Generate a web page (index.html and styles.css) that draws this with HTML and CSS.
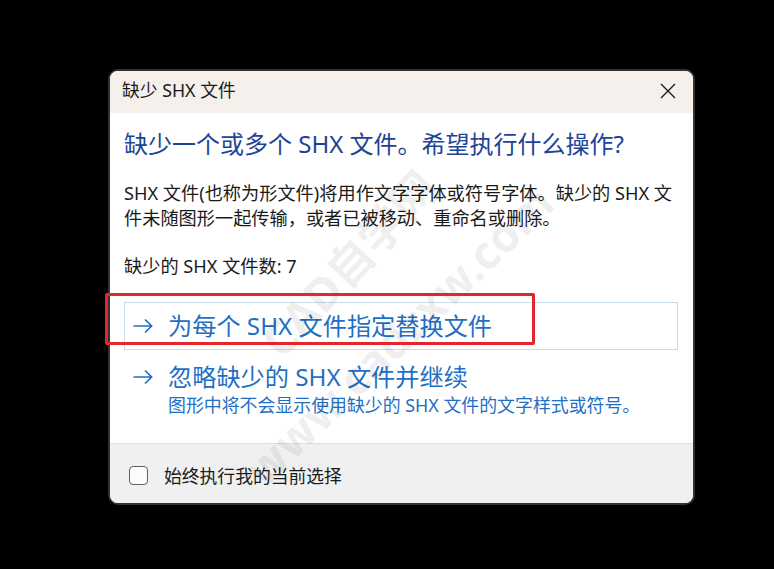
FILE: index.html
```html
<!DOCTYPE html>
<html lang="zh-CN">
<head>
<meta charset="utf-8">
<title>缺少 SHX 文件</title>
<link rel="stylesheet" href="styles.css">
</head>
<body>
<div class="dialog">
  <div class="titlebar">
    <span class="title">缺少 SHX 文件</span>
    <span class="close" aria-label="关闭">
      <svg width="16" height="16" viewBox="0 0 16 16"><path d="M1 1 L15 15 M15 1 L1 15" stroke="#1b1b1b" stroke-width="1.4" fill="none"/></svg>
    </span>
  </div>
  <div class="content">
    <h1 class="instruction">缺少一个或多个 SHX 文件。希望执行什么操作?</h1>
    <p class="body">SHX 文件(也称为形文件)将用作文字字体或符号字体。缺少的 SHX 文<br>件未随图形一起传输，或者已被移动、重命名或删除。</p>
    <p class="body count">缺少的 SHX 文件数: 7</p>
    <div class="link hover">
      <div class="link-main">
        <svg class="arrow" width="20" height="16" viewBox="0 0 20 16"><path d="M0.5 8 H19 M12 1.5 L18.6 8 L12 14.5" stroke="#1f6fc5" stroke-width="1.7" fill="none"/></svg>
        <span>为每个 SHX 文件指定替换文件</span>
      </div>
    </div>
    <div class="link">
      <div class="link-main">
        <svg class="arrow" width="20" height="16" viewBox="0 0 20 16"><path d="M0.5 8 H19 M12 1.5 L18.6 8 L12 14.5" stroke="#1f6fc5" stroke-width="1.7" fill="none"/></svg>
        <span>忽略缺少的 SHX 文件并继续</span>
      </div>
      <div class="link-note">图形中将不会显示使用缺少的 SHX 文件的文字样式或符号。</div>
    </div>
  </div>
  <div class="footer">
    <span class="checkbox"></span>
    <span class="check-label">始终执行我的当前选择</span>
  </div>
</div>
<div class="mark mark-a">CAD自学网</div>
<div class="mark mark-b">www.cadzxw.com</div>
<div class="annotation"></div>
</body>
</html>
```
FILE: styles.css
```css
html, body {
  margin: 0;
  padding: 0;
  background: #000;
}
body {
  padding: 69px 0 0 108px;
  font-family: "Noto Sans", "Noto Sans CJK SC", sans-serif;
  color: #1a1a1a;
  height: 569px;
  box-sizing: border-box;
  overflow: hidden;
}
.dialog {
  width: 587px;
  box-sizing: border-box;
  border: 2px solid #333;
  border-radius: 10px;
  overflow: hidden;
  background: #fff;
}
.titlebar {
  height: 42px;
  box-sizing: border-box;
  background: #f5f0eb;
  display: flex;
  align-items: center;
  justify-content: space-between;
  padding: 0 17px 5px 12px;
}
.title {
  font-size: 17.8px;
  line-height: 24px;
  color: #1a1a1a;
}
.close {
  display: flex;
  width: 16px;
  height: 16px;
  margin-top: 2px;
}
.content {
  padding: 15px 15px 17px 14px;
}
.instruction {
  margin: 0;
  font-weight: normal;
  font-size: 24px;
  line-height: 32px;
  color: #1c4596;
  white-space: nowrap;
}
.body {
  margin: 21px 0 0 0;
  font-size: 18.2px;
  line-height: 24.5px;
  color: #1a1a1a;
  white-space: nowrap;
}
.count {
  margin-top: 24px;
}
.link {
  border: 1px solid transparent;
  padding: 8px;
  color: #1f6fc5;
}
.link.hover {
  margin-top: 23.5px;
  border-color: #c6dbeb;
}
.link + .link {
  margin-top: 3px;
}
.link-main {
  display: flex;
  align-items: center;
  gap: 15px;
  font-size: 24.2px;
  line-height: 30px;
  white-space: nowrap;
}
.arrow {
  flex: none;
}
.link-note {
  padding-left: 35px;
  font-size: 17.9px;
  line-height: 24px;
  margin-top: 1px;
  white-space: nowrap;
}
.footer {
  border-top: 1px solid #dedede;
  background: #f0f0f0;
  height: 60px;
  display: flex;
  align-items: center;
  padding: 4px 0 0 19px;
  box-sizing: border-box;
}
.checkbox {
  width: 19px;
  height: 19px;
  box-sizing: border-box;
  border: 1px solid #616161;
  border-radius: 4px;
  background: #fbfbfb;
  flex: none;
}
.check-label {
  margin-left: 16px;
  font-size: 17.8px;
  line-height: 24px;
  color: #1a1a1a;
}
.mark {
  position: absolute;
  font-family: "Noto Sans", "Noto Sans CJK SC", sans-serif;
  font-weight: bold;
  font-size: 46px;
  color: rgba(0, 0, 0, 0.08);
  white-space: nowrap;
  pointer-events: none;
  transform: translate(-50%, -50%) rotate(-47deg);
}
.mark-a {
  left: 347px;
  top: 262px;
}
.mark-b {
  left: 398px;
  top: 335px;
  transform: translate(-50%, -50%) rotate(-44deg);
}
.annotation {
  position: absolute;
  left: 105px;
  top: 293px;
  width: 430px;
  height: 52px;
  box-sizing: border-box;
  border: 3px solid #e3262b;
  border-radius: 2px;
}
```
